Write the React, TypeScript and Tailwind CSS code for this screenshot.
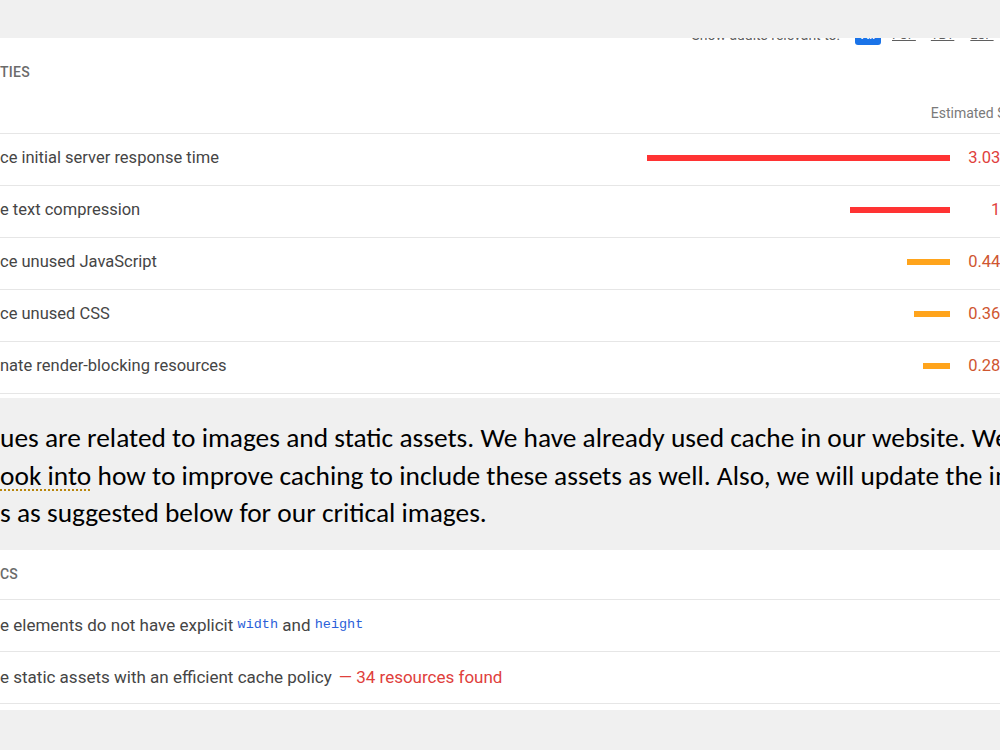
import React from 'react';

const opportunities = [
  { label: 'ce initial server response time', bar: 303, value: '3.03 s', level: 'fail' },
  { label: 'e text compression', bar: 100, value: '1 s', level: 'fail' },
  { label: 'ce unused JavaScript', bar: 43, value: '0.44 s', level: 'average' },
  { label: 'ce unused CSS', bar: 36, value: '0.36 s', level: 'average' },
  { label: 'nate render-blocking resources', bar: 27, value: '0.28 s', level: 'average' },
];

const roboto = { fontFamily: 'Roboto, "Liberation Sans", sans-serif' };
const mono = { fontFamily: '"Liberation Mono", monospace' };

function OpportunityRow({ label, bar, value, level }: { label: string; bar: number; value: string; level: string }) {
  const fail = level === 'fail';
  return (
    <div className="flex items-center h-[52px] pb-[3px] w-[1013px] border-b border-[#e6e6e6] text-[16.5px] text-[#454545]">
      <span className="flex-1 whitespace-nowrap">{label}</span>
      <div className="w-[310px] flex justify-end">
        <div className={fail ? 'h-[6px] bg-[#ff3333]' : 'h-[6px] bg-[#ffa41c]'} style={{ width: bar }} />
      </div>
      <span className={fail ? 'w-[63px] text-right whitespace-nowrap text-[#e0403c]' : 'w-[63px] text-right whitespace-nowrap text-[#cf5630]'}>
        {value}
      </span>
    </div>
  );
}

export default function App() {
  return (
    <div className="w-full h-[750px] overflow-hidden bg-[#f0f0f0]" style={roboto}>
      <div className="h-[38px]" />

      {/* lighthouse opportunities screenshot */}
      <section className="h-[360px] bg-white overflow-hidden">
        <div className="-mt-[15px] h-[24px] flex items-center whitespace-nowrap text-[14px] text-[#5f5f5f]">
          <span className="w-[840px] shrink-0 text-right">Show audits relevant to:</span>
          <span className="ml-[15px] w-[26px] shrink-0 h-[20px] rounded-[3px] bg-[#1a73e8] text-white text-[12px] font-medium flex items-center justify-center">All</span>
          <span className="ml-[11px] underline text-[13px]">FCP</span>
          <span className="ml-[15px] underline text-[13px]">TBT</span>
          <span className="ml-[16px] underline text-[13px]">LCP</span>
        </div>
        <div className="mt-[15px] h-[20px] flex items-center text-[14px] font-medium tracking-[0.02em] text-[#6b6b6b]">TIES</div>
        <div className="mt-[21px] h-[20px] w-[1046px] flex items-center justify-end text-[14px] text-[#7a7a7a] whitespace-nowrap">
          Estimated Savings
        </div>
        <div className="mt-[10px] border-t border-[#e6e6e6]">
          {opportunities.map((o) => (
            <OpportunityRow key={o.label} {...o} />
          ))}
        </div>
      </section>

      {/* word document paragraph */}
      <div
        className="h-[152px] pt-[21px] text-[27.4px] leading-[37.5px] text-black whitespace-nowrap overflow-hidden"
        style={{ fontFamily: 'Carlito, "Liberation Sans Narrow", "Open Sans", sans-serif' }}
      >
        <div>ues are related to images and static assets. We have already used cache in our website. We will</div>
        <div>
          <span className="underline decoration-dotted decoration-2 decoration-[#b8860b] underline-offset-[5px]">ook into</span> how to improve caching to include these assets as well. Also, we will update the image
        </div>
        <div>s as suggested below for our critical images.</div>
      </div>

      {/* lighthouse diagnostics screenshot */}
      <section className="h-[160px] bg-white overflow-hidden">
        <div className="h-[49px] flex items-center text-[14px] font-medium text-[#6b6b6b]">CS</div>
        <div className="border-t border-[#e6e6e6]">
          <div className="h-[52px] flex items-center border-b border-[#e6e6e6] text-[17px] text-[#454545] whitespace-nowrap">
            e elements do not have explicit&nbsp;
            <code className="text-[13.5px] text-[#2b5fd9]" style={mono}>width</code>
            &nbsp;and&nbsp;
            <code className="text-[13.5px] text-[#2b5fd9]" style={mono}>height</code>
          </div>
          <div className="h-[52px] flex items-center border-b border-[#e6e6e6] text-[17px] text-[#454545] whitespace-nowrap">
            e static assets with an efficient cache policy
            <span className="ml-[7px] text-[#e0403c]">—&nbsp;34 resources found</span>
          </div>
        </div>
      </section>
    </div>
  );
}
